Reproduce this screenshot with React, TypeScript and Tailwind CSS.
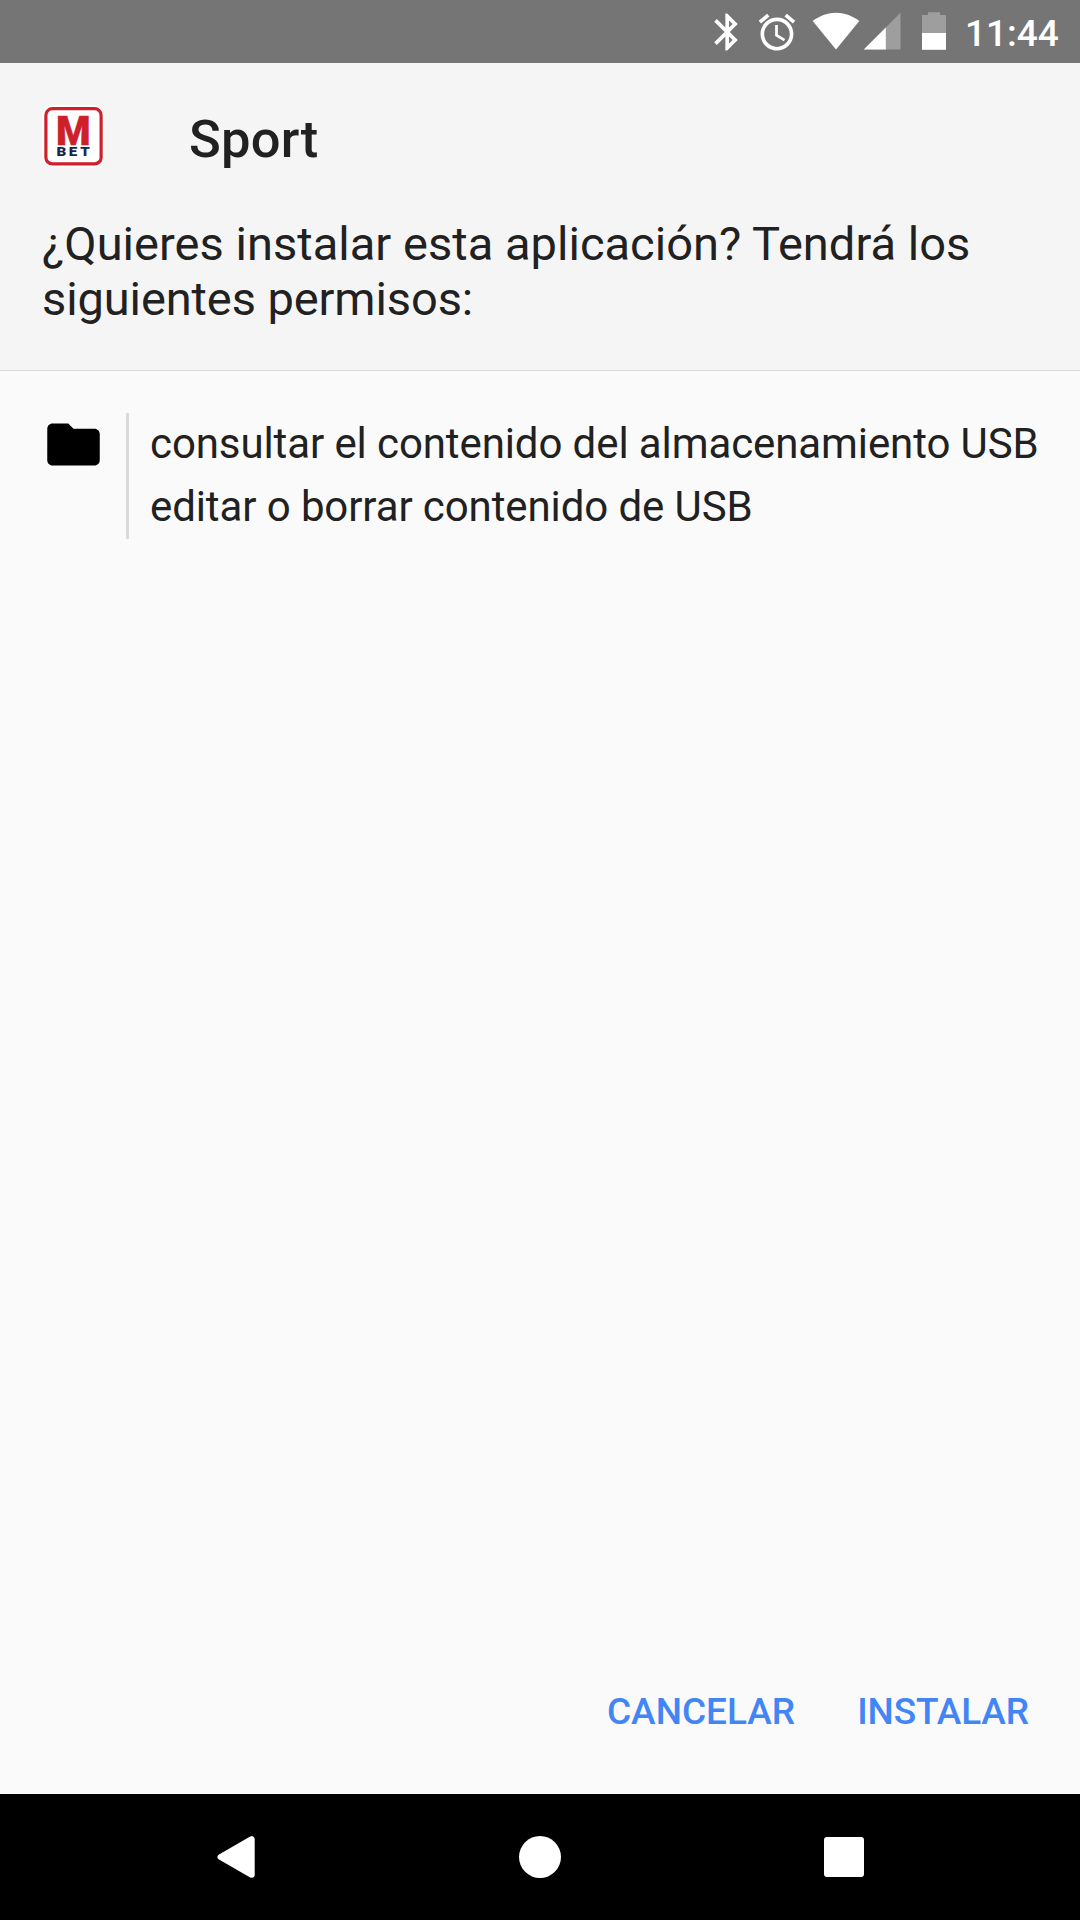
function StatusIcons() {
  return (
    <svg width="250" height="63" viewBox="700 0 250 63" fill="#fff" className="shrink-0">
      <path transform="translate(705 9.8) scale(1.85)" d="M17.71 7.71L12 2h-1v7.59L6.41 5 5 6.41 10.59 12 5 17.59 6.41 19 11 14.41V22h1l5.71-5.71-4.3-4.29 4.3-4.29zM13 5.83l1.88 1.88L13 9.59V5.83zm1.88 10.46L13 18.17v-3.76l1.88 1.88z" />
      <path transform="translate(755 10.3) scale(1.83)" d="M22 5.72l-4.6-3.86-1.29 1.53 4.6 3.86L22 5.72zM7.88 3.39L6.6 1.86 2 5.71l1.29 1.53 4.59-3.85zM12.5 8H11v6l4.75 2.85.75-1.23-4-2.37V8zM12 4c-4.97 0-9 4.03-9 9s4.02 9 9 9c4.97 0 9-4.03 9-9s-4.03-9-9-9zm0 16c-3.87 0-7-3.13-7-7s3.13-7 7-7 7 3.13 7 7-3.13 7-7 7z" />
      <path d="M812.7 21C820 15.5 828 12.7 836 12.7S852 15.5 859.3 21L836 49.5z" />
      <path d="M900.5 12.8v36.7h-36.7z" fill="#9e9e9e" />
      <path d="M885.8 27.5v22h-22z" />
      <path d="M922 15h6v-2.7h12V15h6v19h-24z" fill="#9e9e9e" />
      <path d="M922 33h24v16.8h-24z" />
    </svg>
  );
}

function AppIcon() {
  return (
    <svg width="63" height="63" viewBox="42 105 63 63">
      <rect x="42.3" y="105" width="62.4" height="62.4" rx="10" fill="#fff" />
      <rect x="45.9" y="108.7" width="55.2" height="55.2" rx="6.5" fill="#fff" stroke="#ce202b" strokeWidth="3.2" />
      <text x="56" y="145" fontFamily="Roboto" fontWeight="900" fontSize="40" textLength="34.6" lengthAdjust="spacingAndGlyphs" fill="#ce202b" stroke="#ce202b" strokeWidth="0.5">M</text>
      <text transform="scale(1.25 1)" x="45.2 55 64.3" y="156" fontFamily="Roboto" fontWeight="900" fontSize="12.2" fill="#14284b">BET</text>
    </svg>
  );
}

export default function App() {
  return (
    <div className="flex h-[1920px] w-[1080px] flex-col overflow-hidden bg-[#fafafa] font-['Roboto',sans-serif] text-[#212121]">
      <header className="flex h-[63px] shrink-0 items-center bg-[#757575] pl-[700px] text-white">
        <StatusIcons />
        <span className="ml-[15px] mt-[4px] text-[37px] font-medium leading-none">11:44</span>
      </header>
      <section className="h-[308px] shrink-0 border-b border-[#dadada] bg-[#f5f5f5] px-[42px] pt-[42px]">
        <div className="flex h-[63px] items-center">
          <AppIcon />
          <h1 className="ml-[84px] mt-[5px] text-[52.5px] font-medium leading-none tracking-[0.2px]">Sport</h1>
        </div>
        <p className="mt-[48px] whitespace-nowrap text-[47px] leading-[55px]">
          <span className="tracking-[0.035px]">¿Quieres instalar esta aplicación? Tendrá los</span>
          <br />
          <span className="tracking-[-0.1px]">siguientes permisos:</span>
        </p>
      </section>
      <main className="flex grow pl-[42px] pt-[42px]">
        <svg width="63" height="63" viewBox="0 0 24 24" className="shrink-0">
          <path d="M10 4H4c-1.1 0-1.99.9-1.99 2L2 18c0 1.1.9 2 2 2h16c1.1 0 2-.9 2-2V8c0-1.1-.9-2-2-2h-8l-2-2z" />
        </svg>
        <div className="ml-[21px] h-[126px] border-l-3 border-[#dadada] pl-[21px] text-[42px] leading-[63px] tracking-[-0.1px]">
          <p className="-mt-px whitespace-nowrap">consultar el contenido del almacenamiento USB</p>
          <p>editar o borrar contenido de USB</p>
        </div>
      </main>
      <div className="flex h-[166px] shrink-0 items-start justify-end gap-[62px] pr-[51px] pt-[56px] text-[37px] font-medium leading-[56px] text-[#4285f4]">
        <button>CANCELAR</button>
        <button className="tracking-[-0.1px]">INSTALAR</button>
      </div>
      <nav className="flex h-[126px] shrink-0 items-center bg-black pl-[217px]">
        <svg width="38" height="42" viewBox="0 0 38 42" fill="#fff" stroke="#fff" strokeWidth="6" strokeLinejoin="round">
          <path d="M3.5 21L34.7 3.2v35.6z" />
        </svg>
        <div className="ml-[264px] size-[42px] rounded-full bg-white" />
        <div className="ml-[263px] size-[40px] rounded-[3px] bg-white" />
      </nav>
    </div>
  );
}
